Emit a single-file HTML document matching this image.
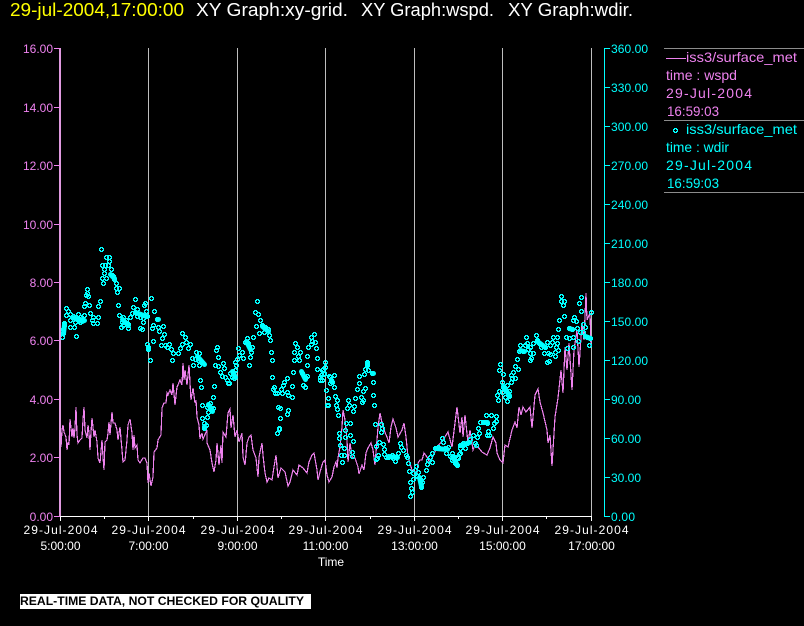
<!DOCTYPE html>
<html><head><meta charset="utf-8"><title>XY Graph</title>
<style>html,body{margin:0;padding:0;background:#000;width:804px;height:626px;overflow:hidden}svg{display:block}text{font-family:"Liberation Sans",sans-serif}</style></head>
<body>
<svg width="804" height="626" viewBox="0 0 804 626" xmlns="http://www.w3.org/2000/svg">
<defs><marker id="m" markerWidth="5" markerHeight="5" refX="2" refY="2" markerUnits="userSpaceOnUse"><path fill="#0ff" fill-rule="evenodd" shape-rendering="crispEdges" d="M1 0h3v1h1v3h-1v1h-3v-1h-1v-3h1zM2 1v1h-1v1h1v1h1v-1h1v-1h-1v-1z"/></marker></defs>
<rect width="804" height="626" fill="#000"/>
<g font-size="18">
<text x="10" y="16" fill="#ff0" textLength="174" lengthAdjust="spacingAndGlyphs">29-jul-2004,17:00:00</text>
<text x="196" y="16" fill="#fff" textLength="152" lengthAdjust="spacingAndGlyphs">XY Graph:xy-grid.</text>
<text x="361" y="16" fill="#fff" textLength="133" lengthAdjust="spacingAndGlyphs">XY Graph:wspd.</text>
<text x="508" y="16" fill="#fff" textLength="125" lengthAdjust="spacingAndGlyphs">XY Graph:wdir.</text>
</g>
<!-- grid -->
<g fill="#bebebe"><rect x="148" y="48" width="1" height="468"/><rect x="237" y="48" width="1" height="468"/><rect x="325" y="48" width="1" height="468"/><rect x="414" y="48" width="1" height="468"/><rect x="502" y="48" width="1" height="468"/><rect x="591" y="48" width="1" height="468"/></g>
<!-- data -->
<polyline fill="none" stroke="#ee82ee" stroke-width="1.2" shape-rendering="crispEdges" points="60,440 61,447 62,430 63,425 64,432 66,437 67,450 68,442 69,445 70,419 72,437 73,428 74,438 75,428 76,407 77,435 78,443 80,440 82,438 83,420 84,407 85,430 87,438 88,425 89,433 90,450 91,432 92,418 94,437 95,430 97,442 98,458 100,463 102,440 103,457 104,470 105,442 107,440 108,433 109,422 110,435 112,412 113,423 115,423 117,430 118,440 120,427 122,450 123,462 125,460 127,440 128,425 130,419 132,433 133,450 134,435 135,448 137,445 138,460 140,463 143,458 145,458 147,463 148,483 149,473 151,486 153,477 154,452 157,448 158,440 161,435 162,408 164,403 166,403 167,393 168,395 170,390 172,395 173,383 175,405 177,387 178,385 180,380 182,385 183,363 184,380 185,370 187,385 189,365 191,400 193,388 195,403 196,400 197,417 199,425 200,439 202,433 203,439 207,430 207,443 210,450 212,463 214,472 216,460 217,443 219,465 221,445 222,463 223,432 226,437 228,413 230,409 231,428 233,415 235,437 237,430 239,442 242,433 243,457 245,465 247,443 249,437 251,435 253,450 256,458 258,477 259,457 262,443 263,455 265,473 267,482 269,478 272,480 274,467 276,455 278,478 281,468 285,472 288,486 290,482 293,470 297,475 299,465 303,468 307,473 309,462 312,455 314,453 317,470 318,480 320,472 323,462 325,460 327,475 329,482 332,477 334,467 336,462 337,468 338,458 340,447 342,427 343,410 345,420 347,440 348,462 350,443 352,457 355,458 358,467 359,474 362,465 364,470 366,453 368,448 371,443 373,450 375,465 377,440 378,427 380,413 382,423 384,430 387,437 389,443 391,427 393,419 396,428 398,437 402,430 404,423 406,437 408,457 412,470 417,473 418,463 420,460 422,460 424,453 427,457 430,463 437,447 443,440 448,432 452,447 455,423 457,407 460,433 462,417 463,437 465,415 468,443 470,430 473,450 475,445 478,447 482,452 487,455 490,448 493,437 496,443 497,453 500,460 503,463 505,445 508,447 512,430 515,422 517,428 519,407 521,415 523,407 526,412 530,407 532,428 535,395 538,389 540,402 543,413 547,430 548,443 550,435 552,466 555,417 558,398 561,370 563,393 565,347 567,370 569,343 572,390 574,350 577,330 579,367 582,323 584,340 586,293 587,320 590,313 591,347"/>
<polyline fill="none" stroke="none" marker-start="url(#m)" marker-mid="url(#m)" marker-end="url(#m)" points="101,249 106,257 109,257 109,261 102,265 105,265 108,265 111,269 104,269 104,273 112,275 113,276 102,278 106,278 114,279 103,283 116,283 116,288 119,288 117,292 87,289 87,293 86,295 88,296 100,301 98,306 85,303 84,306 89,305 66,308 68,311 66,315 70,314 73,316 78,314 80,317 83,320 84,315 70,320 75,322 80,322 64,323 64,325 70,327 74,327 63,329 63,333 62,337 76,336 90,313 93,317 98,317 92,320 93,323 97,323 118,305 135,299 151,298 145,303 144,305 133,307 137,309 154,311 146,311 119,315 132,313 135,312 130,317 137,316 140,317 147,316 143,318 157,319 123,317 122,322 126,320 128,324 123,325 121,327 128,328 143,322 153,325 152,328 158,327 163,326 140,328 142,329 159,331 164,334 162,338 153,341 147,344 148,347 148,349 161,345 165,345 169,344 167,347 171,349 173,353 178,353 180,348 182,333 185,337 182,344 186,342 188,348 190,344 150,360 172,360 257,301 255,312 258,314 260,320 256,326 262,325 265,327 268,329 259,333 264,332 269,335 270,340 247,338 253,337 245,342 248,343 252,347 238,348 242,352 251,352 239,355 250,357 243,358 237,359 235,362 236,365 249,365 217,347 216,350 218,357 215,365 218,366 223,363 224,368 220,372 222,376 225,377 230,373 233,372 235,370 232,377 234,378 227,380 228,383 229,383 196,352 199,353 192,358 195,359 198,360 193,365 199,365 200,380 201,387 214,386 213,397 202,405 210,403 207,407 211,408 213,408 208,412 207,417 202,418 204,423 206,425 204,428 271,352 272,360 272,377 295,343 297,347 294,352 300,352 298,356 294,360 299,360 293,372 307,365 308,347 311,344 314,334 311,337 312,341 315,342 316,348 307,356 317,358 317,369 325,362 325,367 322,370 321,375 320,380 324,373 329,376 330,383 326,390 328,398 327,405 302,373 305,377 307,376 303,385 305,387 287,378 284,382 283,385 281,389 274,387 273,389 275,393 277,393 282,393 287,392 288,395 292,397 292,386 278,407 280,408 288,410 287,414 280,418 279,428 279,429 277,433 323,369 324,374 320,377 322,380 334,375 330,377 331,380 332,382 334,387 335,396 328,398 337,400 336,405 328,405 337,409 338,415 348,400 349,405 347,408 354,406 353,411 355,398 361,397 363,400 362,402 357,389 359,383 365,388 363,391 359,376 364,374 367,362 367,365 365,369 368,370 372,373 373,382 373,395 374,405 346,423 350,423 339,433 339,438 345,430 345,437 350,435 353,441 340,445 344,448 341,455 344,455 352,452 352,456 342,462 375,424 381,424 382,428 381,432 379,442 376,446 383,444 384,449 378,455 377,458 384,454 376,459 386,457 388,457 392,455 393,458 395,461 398,453 400,443 401,447 403,450 406,455 407,457 408,463 409,471 416,466 415,470 418,472 413,473 417,476 410,482 413,479 411,488 412,492 410,496 420,480 422,482 421,487 423,477 426,470 427,464 428,460 432,462 430,457 432,453 435,448 438,447 442,438 443,442 445,448 448,447 446,453 452,453 453,458 457,457 455,463 457,465 460,445 460,453 561,296 561,301 564,301 563,305 581,297 579,303 591,312 581,311 564,316 559,320 574,317 573,320 576,321 558,329 569,328 572,329 577,328 583,324 585,327 580,332 583,332 587,337 590,338 566,337 569,338 573,337 578,341 589,345 567,348 573,347 526,337 536,335 553,337 557,337 520,345 525,345 527,343 530,347 533,343 537,340 539,343 541,347 545,347 547,342 550,345 552,342 557,343 556,347 558,350 519,351 523,351 528,349 533,353 530,353 544,353 548,353 550,354 555,352 555,356 531,358 530,360 549,361 547,362 517,359 500,364 499,370 503,374 515,366 518,369 513,372 511,375 512,378 515,378 502,382 511,382 503,387 507,385 499,391 497,395 502,392 506,390 509,391 505,397 509,396 498,400 507,401 486,415 491,415 496,416 483,422 480,422 487,423 496,421 494,423 493,428 478,428 488,431 489,435 487,435 479,433 473,435 477,437 470,439 467,443 463,443 460,445 460,448 465,448 475,443 476,445 452,453 454,457 450,456 459,454 458,458 452,460 457,465 455,462"/>
<path transform="translate(.5 .5)" fill="none" stroke="#0ff" stroke-width="5" stroke-linecap="round" d="M122 319L128 325M72 317L82 321M262 326L268 331M110 274L114 278M419 477L421 486M436 448L447 449M388 456L397 457M520 350L524 351M537 341L545 347M585 336L590 338M461 445L469 442M483 422L487 422M452 456L457 465M569 328L572 329M503 386L509 395M301 371L305 379M232 371L235 377M246 341L250 349M197 356L204 364M208 404L212 411M367 363L367 365M372 373L373 373M331 380L332 382M148 347L148 349M157 319L158 319M204 428L204 426M64 324L63 333M135 312L146 316M76 318L84 320"/>
<!-- left axis -->
<rect x="59" y="48" width="2" height="468" fill="#e09ae0"/>
<g fill="#ee82ee"><rect x="54" y="48" width="6" height="1"/><rect x="54" y="107" width="6" height="1"/><rect x="54" y="165" width="6" height="1"/><rect x="54" y="224" width="6" height="1"/><rect x="54" y="282" width="6" height="1"/><rect x="54" y="340" width="6" height="1"/><rect x="54" y="399" width="6" height="1"/><rect x="54" y="457" width="6" height="1"/><rect x="54" y="516" width="6" height="1"/></g>
<g font-size="12" fill="#ee82ee" text-anchor="end">
<text x="53" y="53">16.00</text><text x="53" y="112">14.00</text><text x="53" y="170">12.00</text><text x="53" y="229">10.00</text><text x="53" y="287">8.00</text><text x="53" y="345">6.00</text><text x="53" y="404">4.00</text><text x="53" y="462">2.00</text><text x="53" y="521">0.00</text>
</g>
<!-- right axis -->
<rect x="604" y="48" width="1" height="468" fill="#0ff"/>
<g fill="#0ff"><rect x="604" y="48" width="6" height="1"/><rect x="604" y="87" width="6" height="1"/><rect x="604" y="126" width="6" height="1"/><rect x="604" y="165" width="6" height="1"/><rect x="604" y="204" width="6" height="1"/><rect x="604" y="243" width="6" height="1"/><rect x="604" y="282" width="6" height="1"/><rect x="604" y="321" width="6" height="1"/><rect x="604" y="360" width="6" height="1"/><rect x="604" y="399" width="6" height="1"/><rect x="604" y="438" width="6" height="1"/><rect x="604" y="477" width="6" height="1"/><rect x="604" y="516" width="6" height="1"/></g>
<g font-size="12" fill="#0ff">
<text x="611" y="53" textLength="37">360.00</text><text x="611" y="92" textLength="37">330.00</text><text x="611" y="131" textLength="37">300.00</text><text x="611" y="170" textLength="37">270.00</text><text x="611" y="209" textLength="37">240.00</text><text x="611" y="248" textLength="37">210.00</text><text x="611" y="287" textLength="37">180.00</text><text x="611" y="326" textLength="37">150.00</text><text x="611" y="365" textLength="37">120.00</text><text x="611" y="404" textLength="30">90.00</text><text x="611" y="443" textLength="30">60.00</text><text x="611" y="482" textLength="30">30.00</text><text x="611" y="521" textLength="24">0.00</text>
</g>
<!-- x axis -->
<rect x="60" y="516" width="532" height="1" fill="#fff"/>
<g fill="#fff"><rect x="60" y="516" width="1" height="5"/><rect x="148" y="516" width="1" height="5"/><rect x="237" y="516" width="1" height="5"/><rect x="325" y="516" width="1" height="5"/><rect x="414" y="516" width="1" height="5"/><rect x="502" y="516" width="1" height="5"/><rect x="591" y="516" width="1" height="5"/><rect x="104" y="516" width="1" height="3"/><rect x="193" y="516" width="1" height="3"/><rect x="281" y="516" width="1" height="3"/><rect x="370" y="516" width="1" height="3"/><rect x="458" y="516" width="1" height="3"/><rect x="546" y="516" width="1" height="3"/></g>
<g font-size="12" fill="#fff" text-anchor="middle">
<text x="60.5" y="534" textLength="74">29-Jul-2004</text><text x="148.5" y="534" textLength="74">29-Jul-2004</text><text x="237.5" y="534" textLength="74">29-Jul-2004</text><text x="325.5" y="534" textLength="74">29-Jul-2004</text><text x="414.5" y="534" textLength="74">29-Jul-2004</text><text x="502.5" y="534" textLength="74">29-Jul-2004</text><text x="591.5" y="534" textLength="74">29-Jul-2004</text>
<text x="60.5" y="550">5:00:00</text><text x="148.5" y="550">7:00:00</text><text x="237.5" y="550">9:00:00</text><text x="325.5" y="550">11:00:00</text><text x="414.5" y="550">13:00:00</text><text x="502.5" y="550">15:00:00</text><text x="591.5" y="550">17:00:00</text>
<text x="331" y="566">Time</text>
</g>
<!-- legend -->
<g fill="#8c8c8c"><rect x="664" y="48" width="140" height="1"/><rect x="664" y="120" width="140" height="1"/><rect x="664" y="192" width="140" height="1"/></g>
<rect x="666" y="58" width="20" height="1" fill="#ee82ee"/>
<path fill="#0ff" fill-rule="evenodd" shape-rendering="crispEdges" d="M674 128h3v1h1v3h-1v1h-3v-1h-1v-3h1zM675 129v1h-1v1h1v1h1v-1h1v-1h-1v-1z"/>
<g font-size="14" fill="#ee82ee">
<text x="686" y="62" textLength="111" lengthAdjust="spacingAndGlyphs">iss3/surface_met</text>
<text x="666" y="80" textLength="71" lengthAdjust="spacingAndGlyphs">time : wspd</text>
<text x="666" y="98" textLength="86">29-Jul-2004</text>
<text x="667" y="116" textLength="52" lengthAdjust="spacingAndGlyphs">16:59:03</text>
</g>
<g font-size="14" fill="#0ff">
<text x="686" y="134" textLength="111" lengthAdjust="spacingAndGlyphs">iss3/surface_met</text>
<text x="666" y="152" textLength="63" lengthAdjust="spacingAndGlyphs">time : wdir</text>
<text x="666" y="170" textLength="86">29-Jul-2004</text>
<text x="667" y="188" textLength="52" lengthAdjust="spacingAndGlyphs">16:59:03</text>
</g>
<!-- footer -->
<rect x="20" y="594" width="291" height="15" fill="#fff"/>
<text x="20" y="605" font-size="12" font-weight="bold" fill="#000" textLength="284" lengthAdjust="spacingAndGlyphs">REAL-TIME DATA, NOT CHECKED FOR QUALITY</text>
</svg>
</body></html>
